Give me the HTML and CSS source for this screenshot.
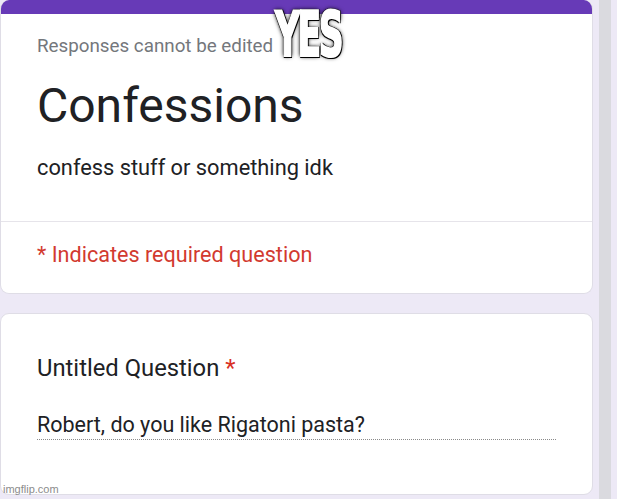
FILE: index.html
```html
<!DOCTYPE html>
<html>
<head>
<meta charset="utf-8">
<link rel="stylesheet" href="styles.css">
</head>
<body>
<div class="page">
  <main class="column">
    <section class="card header-card">
      <div class="accent"></div>
      <div class="header-body">
        <p class="note">Responses cannot be edited</p>
        <h1 class="title">Confessions</h1>
        <p class="desc">confess stuff or something idk</p>
      </div>
      <div class="required-row">
        <p class="required">* Indicates required question</p>
      </div>
    </section>
    <section class="card question-card">
      <h2 class="question">Untitled Question <span class="star">*</span></h2>
      <div class="answer">Robert, do you like Rigatoni pasta?</div>
    </section>
  </main>
  <div class="scroll-gutter"><div class="scrollbar"></div></div>
</div>
<div class="meme">YES</div>
<div class="watermark">imgflip.com</div>
</body>
</html>
```
FILE: styles.css
```css
html, body {
  margin: 0;
  padding: 0;
  background: #ede9f6;
  font-family: Roboto, "Liberation Sans", sans-serif;
  color: #202124;
}
.page {
  display: flex;
  height: 499px;
  overflow: hidden;
}
.column {
  width: 593px;
  display: flex;
  flex-direction: column;
  gap: 19px;
}
.card {
  background: #fff;
  border: 1px solid #dfdde6;
  border-radius: 9px;
  box-sizing: border-box;
}
.header-card {
  border-top: none;
  overflow: hidden;
  height: 294px;
  display: flex;
  flex-direction: column;
}
.accent {
  height: 14px;
  background: #673ab7;
}
.header-body {
  padding: 21px 36px 0;
  height: 208px;
  box-sizing: border-box;
  border-bottom: 1px solid #e6e4ea;
}
.note {
  margin: 0;
  font-size: 18.8px;
  color: #74777c;
  line-height: 22px;
}
.title {
  margin: 21px 0 0;
  font-size: 48px;
  font-weight: 400;
  line-height: 56px;
  color: #202124;
}
.desc {
  margin: 21px 0 0;
  font-size: 21.8px;
  line-height: 26px;
}
.required-row {
  padding: 20px 36px 0;
}
.required {
  margin: 0;
  font-size: 21.6px;
  line-height: 26px;
  color: #d23a2f;
}
.question-card {
  height: 182px;
  padding: 39px 36px 0;
}
.question {
  margin: 0;
  font-size: 23.8px;
  font-weight: 400;
  line-height: 30px;
}
.star {
  color: #d93025;
}
.answer {
  margin-top: 29px;
  width: 519px;
  font-size: 21.5px;
  line-height: 26px;
  border-bottom: 1px dotted #8a8a8a;
  padding-bottom: 1px;
}
.scroll-gutter {
  flex: 1;
  padding: 0 6px;
  display: flex;
}
.scrollbar {
  width: 12px;
  background: #dadadf;
}
.meme {
  position: absolute;
  left: 275px;
  top: 4px;
  font-family: "DejaVu Sans Condensed", "DejaVu Sans", sans-serif;
  font-weight: 700;
  font-size: 62px;
  line-height: 1;
  color: #fff;
  letter-spacing: -4px;
  transform: scaleX(0.62);
  transform-origin: left top;
  -webkit-text-stroke: 2px #fff;
  text-shadow: 2px 2px 0 #000, -1px -1px 0 #000, 2px -1px 0 #000, -1px 2px 0 #000, 0 0 4px #000, 0 0 7px #000;
}
.watermark {
  position: absolute;
  left: 3px;
  top: 483px;
  font-size: 11px;
  color: #8c8c8c;
  font-family: "Liberation Sans", sans-serif;
}
```
